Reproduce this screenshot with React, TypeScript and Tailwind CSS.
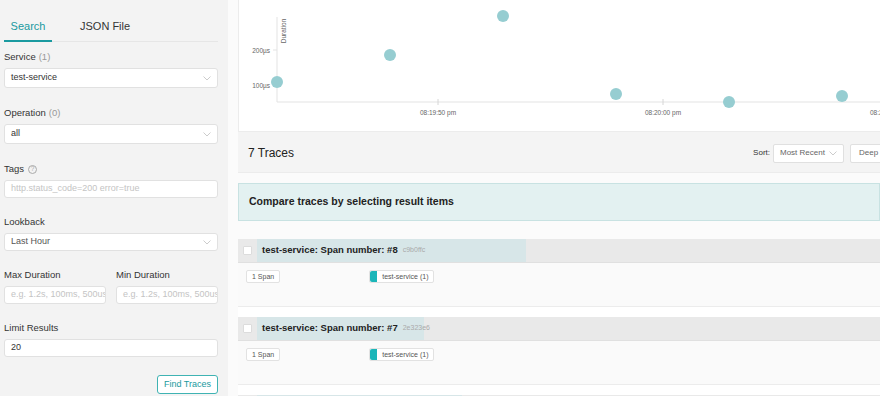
import React from "react";

const font = { fontFamily: '"Liberation Sans", Arial, sans-serif' };

const Chevron = () => (
  <svg width="8" height="5" viewBox="0 0 8 5" className="text-[#bfbfbf]">
    <path d="M0.5 0.5 L4 4 L7.5 0.5" fill="none" stroke="currentColor" strokeWidth="0.8" />
  </svg>
);

const Label = ({ children, count }: { children: React.ReactNode; count?: string }) => (
  <div className="text-[9.5px] leading-[12px] text-[#333] flex items-center gap-[3px]">
    {children}
    {count && <span className="text-[#999]">{count}</span>}
  </div>
);

const Select = ({ value, muted = false, short = false }: { value: string; muted?: boolean; short?: boolean }) => (
  <div
    className={`mt-[5px] ${short ? "h-[18px]" : "h-[20px]"} bg-white border border-[#e1e1e1] rounded-[3px] flex items-center justify-between pl-[6px] pr-[6px]`}
  >
    <span className={`text-[9px] ${muted ? "text-[#555]" : "text-[#333]"}`}>{value}</span>
    <Chevron />
  </div>
);

const Input = ({ value, placeholder }: { value?: string; placeholder?: string }) => (
  <div className="mt-[5px] h-[18px] bg-white border border-[#e1e1e1] rounded-[3px] flex items-center pl-[6px] overflow-hidden whitespace-nowrap">
    {value ? (
      <span className="text-[9px] text-[#333]">{value}</span>
    ) : (
      <span className="text-[9px] text-[#c4c4c4]">{placeholder}</span>
    )}
  </div>
);

const Sidebar = () => (
  <div className="w-[228px] shrink-0 bg-[#f3f3f3] pl-[4px] pr-[10px] h-[396px]">
    <div className="flex border-b border-[#e6e6e6] h-[42px] leading-[12px]">
      <div className="relative w-[48px] flex justify-center pt-[20px]">
        <span className="block text-[11px] leading-[12px] text-[#1a9aa0]">Search</span>
        <div className="absolute left-0 right-0 bottom-[-1px] h-[2px] bg-[#1a9aa0]" />
      </div>
      <div className="ml-[28px] pt-[20px]">
        <span className="block text-[11px] leading-[12px] text-[#333]">JSON File</span>
      </div>
    </div>

    <div className="mt-[9px]">
      <Label count="(1)">Service</Label>
      <Select value="test-service" />
    </div>
    <div className="mt-[19px]">
      <Label count="(0)">Operation</Label>
      <Select value="all" />
    </div>
    <div className="mt-[19px]">
      <Label>
        Tags
        <span className="ml-[1px] w-[9px] h-[9px] rounded-full border border-[#aaa] text-[#aaa] text-[6.5px] leading-none flex items-center justify-center">
          ?
        </span>
      </Label>
      <Input placeholder="http.status_code=200 error=true" />
    </div>
    <div className="mt-[18px]">
      <Label>Lookback</Label>
      <Select value="Last Hour" muted short />
    </div>
    <div className="mt-[18px] grid grid-cols-2 gap-x-[10px]">
      <div>
        <Label>Max Duration</Label>
        <Input placeholder="e.g. 1.2s, 100ms, 500us" />
      </div>
      <div>
        <Label>Min Duration</Label>
        <Input placeholder="e.g. 1.2s, 100ms, 500us" />
      </div>
    </div>
    <div className="mt-[18px]">
      <Label>Limit Results</Label>
      <Input value="20" />
    </div>
    <div className="mt-[18px] flex justify-end">
      <button className="w-[61px] h-[19px] bg-white border border-[#3fb3b3] rounded-[3px] text-[9px] text-[#1a9aa0]">
        Find Traces
      </button>
    </div>
  </div>
);

const dots = [
  [38, 82],
  [151, 55],
  [264, 16],
  [377, 94],
  [490, 102],
  [603, 96],
];

const Chart = () => (
  <div className="h-[132px] bg-white border-l border-b border-[#ececec] overflow-hidden">
    <svg width="660" height="132" style={font}>
      <line x1="38" y1="17" x2="38" y2="102" stroke="#e3e3e3" strokeWidth="1" />
      <line x1="38" y1="102" x2="660" y2="102" stroke="#e3e3e3" strokeWidth="1" />
      <line x1="34" y1="50" x2="38" y2="50" stroke="#e3e3e3" />
      <line x1="34" y1="85" x2="38" y2="85" stroke="#e3e3e3" />
      <line x1="199" y1="99" x2="199" y2="105" stroke="#d6d6d6" />
      <line x1="424" y1="99" x2="424" y2="105" stroke="#d6d6d6" />
      <text x="31" y="53" fontSize="6.5" fill="#666" textAnchor="end">200µs</text>
      <text x="31" y="88" fontSize="6.5" fill="#666" textAnchor="end">100µs</text>
      <text x="0" y="0" fontSize="6.5" fill="#666" textAnchor="middle" transform="translate(47 31) rotate(-90)">
        Duration
      </text>
      <text x="199" y="115" fontSize="6.5" fill="#666" textAnchor="middle">08:19:50 pm</text>
      <text x="424" y="115" fontSize="6.5" fill="#666" textAnchor="middle">08:20:00 pm</text>
      <text x="649" y="115" fontSize="6.5" fill="#666" textAnchor="middle">08:20:10 pm</text>
      {dots.map(([x, y], i) => (
        <circle key={i} cx={x} cy={y} r="6" fill="#96cdd1" />
      ))}
    </svg>
  </div>
);

const TraceRow = ({ n, id, barWidth }: { n: number; id: string; barWidth: number }) => (
  <div className="border-b border-[#ececec]">
    <div className="h-[24px] bg-[#e9e9e9] flex border-b border-[#e0e0e0]">
      <div className="w-[19px] flex items-center justify-center">
        <div className="w-[9px] h-[9px] bg-white border border-[#dcdcdc] rounded-[1px]" />
      </div>
      <div className="bg-[#d7e6e8] flex items-center pl-[5px] whitespace-nowrap" style={{ width: barWidth }}>
        <span className="text-[9.5px] font-bold text-[#222]">test-service: Span number: #{n}</span>
        <span className="ml-[5px] text-[7px] text-[#aaa]">{id}</span>
      </div>
    </div>
    <div className="h-[43px] bg-[#fafafa] flex items-start pt-[7px] pl-[8px]">
      <div className="h-[13px] px-[5px] bg-white border border-[#e2e2e2] rounded-[2px] text-[7px] leading-[11px] text-[#555]">
        1 Span
      </div>
      <div className="ml-[89px] h-[13px] bg-white border border-[#e2e2e2] rounded-[2px] flex items-stretch">
        <div className="w-[7px] bg-[#1bb6b9] rounded-l-[2px]" />
        <span className="px-[5px] text-[7px] leading-[11px] text-[#555]">test-service (1)</span>
      </div>
    </div>
  </div>
);

export default function App() {
  return (
    <div className="flex w-[880px] h-[396px] overflow-hidden bg-white" style={font}>
      <Sidebar />
      <div className="flex-1 pl-[10px] bg-[#fbfbfb] min-w-0 overflow-hidden">
        <Chart />
        <div className="h-[41px] bg-[#f4f4f4] flex items-center justify-between pl-[10px] border-b border-[#ececec] pt-[2px]">
          <span className="text-[12px] text-[#222]">7 Traces</span>
          <div className="flex items-center whitespace-nowrap mr-[-24px]">
            <span className="text-[8px] text-[#333]">Sort:</span>
            <div className="ml-[3px] h-[19px] w-[71px] bg-white border border-[#e0e0e0] rounded-[2px] flex items-center justify-between px-[6px]">
              <span className="text-[8px] text-[#666]">Most Recent</span>
              <Chevron />
            </div>
            <div className="ml-[6px] h-[19px] w-[54px] bg-white border border-[#e0e0e0] rounded-[2px] flex items-center pl-[8px]">
              <span className="text-[8px] text-[#666]">Deep</span>
            </div>
          </div>
        </div>
        <div className="mt-[10px] h-[38px] bg-[#e3f1f1] border border-[#c8e2e2] flex items-center pl-[10px]">
          <span className="text-[10.5px] font-bold text-[#222]">Compare traces by selecting result items</span>
        </div>
        <div className="mt-[18px] bg-white flex flex-col gap-[10px]">
          <TraceRow n={8} id="c9b0ffc" barWidth={269} />
          <TraceRow n={7} id="2e323e6" barWidth={167} />
          <TraceRow n={6} id="a81f3c2" barWidth={205} />
        </div>
      </div>
    </div>
  );
}
